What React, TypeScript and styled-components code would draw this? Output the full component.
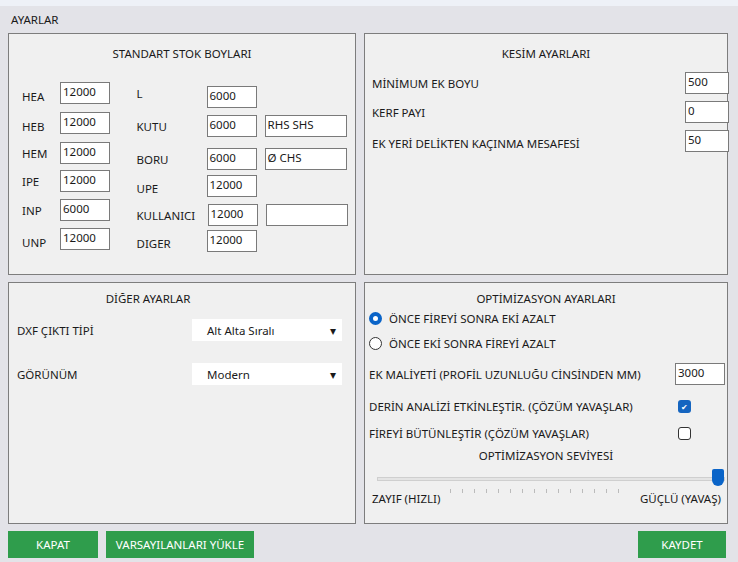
import React from "react";
import styled, { createGlobalStyle } from "styled-components";

const G = createGlobalStyle`
  html,body{margin:0;padding:0;background:#e3e3e8;}
  *{box-sizing:border-box;}
  body{font-family:"Noto Sans","Open Sans",sans-serif;font-size:11.5px;color:#1a1a1a;}
`;
const Win = styled.div`width:738px;height:562px;border-top:6px solid #eef1f7;display:flex;flex-direction:column;padding:0 8px 0 8px;`;
const Head = styled.div`height:27px;padding:6px 0 0 3px;`;
const Grid = styled.div`display:grid;grid-template-columns:348px 364px;grid-template-rows:242px 242px;column-gap:8px;row-gap:7px;`;
const Panel = styled.div`background:#f0f0f0;border:1px solid #7d7d7d;display:flex;flex-direction:column;position:relative;`;
const Title = styled.div<{ $t: number; $dx?: number }>`text-align:center;margin-top:${p => p.$t}px;margin-left:${p => p.$dx ?? 0}px;height:16px;`;
const Cols = styled.div`display:flex;`;
const Col = styled.div<{ $l: number; $w: number }>`margin-left:${p => p.$l}px;width:${p => p.$w}px;display:flex;flex-direction:column;`;
const Row = styled.div<{ $t: number }>`display:flex;align-items:center;margin-top:${p => p.$t}px;height:22px;`;
const Lbl = styled.span<{ $w: number; $dy?: number }>`width:${p => p.$w}px;flex:none;position:relative;top:${p => p.$dy ?? 0}px;`;
const Box = styled.div<{ $w: number; $ml?: number; $dy?: number }>`width:${p => p.$w}px;height:22px;margin-left:${p => p.$ml ?? 0}px;background:#fff;border:1px solid #7a7a7a;padding:1px 2px;line-height:16px;position:relative;top:${p => p.$dy ?? 0}px;`;
const Sel = styled.div`width:150px;height:22px;margin-left:auto;background:#fff;display:flex;align-items:center;justify-content:space-between;padding:0 6px 0 15px;`;
const Radio = styled.span<{ $on?: boolean }>`width:13px;height:13px;border-radius:50%;margin-right:7px;border:${p => p.$on ? "4px solid #0a64c8" : "1px solid #333"};background:#fff;flex:none;`;
const Check = styled.span<{ $on?: boolean }>`width:13px;height:13px;border-radius:3px;margin-left:auto;margin-right:36px;display:flex;align-items:center;justify-content:center;color:#fff;font-size:8px;${p => p.$on ? "background:#1565c0;" : "border:1px solid #333;background:#fff;"}`;
const Track = styled.div`margin:13px 2px 0 12px;height:4px;background:#e4e4e4;border:1px solid #cfcfcf;position:relative;`;
const Thumb = styled.div`position:absolute;right:0;top:-9px;width:12px;height:17px;background:#0a64c8;border-radius:2px 2px 6px 6px;`;
const Ticks = styled.div`flex:1;height:4px;margin:0 10px;align-self:flex-start;margin-top:2px;background:repeating-linear-gradient(90deg,#bbb 0 1px,transparent 1px 12px);`;
const Bottom = styled.div`display:flex;gap:8px;margin-top:7px;`;
const Btn = styled.div<{ $w: number; $auto?: boolean }>`width:${p => p.$w}px;height:27px;background:#2f9d4c;color:#fff;display:flex;align-items:center;justify-content:center;${p => p.$auto ? "margin-left:auto;margin-right:4px;" : ""}`;

export default function App() {
  return (
    <Win>
      <G />
      <Head>AYARLAR</Head>
      <Grid>
        <Panel>
          <Title $t={12}>STANDART STOK BOYLARI</Title>
          <Cols>
            <Col $l={13} $w={110}>
              {[["HEA", "12000", 20], ["HEB", "12000", 8], ["HEM", "12000", 8], ["IPE", "12000", 6], ["INP", "6000", 7], ["UNP", "12000", 7]].map(([l, v, t], i) => (
                <Row key={i} $t={t as number}><Lbl $w={38} $dy={i === 0 || i === 1 || i === 5 ? 3 : 0}>{l}</Lbl><Box $w={50}>{v}</Box></Row>
              ))}
            </Col>
            <Col $l={10} $w={230}>
              {[["L", "6000", 24, ""], ["KUTU", "6000", 7, "RHS SHS"], ["BORU", "6000", 11, "Ø CHS"], ["UPE", "12000", 5, null], ["KULLANICI", "12000", 7, " "], ["DIGER", "12000", 4, null]].map(([l, v, t, e], i) => (
                <Row key={i} $t={t as number}>
                  <Lbl $w={i === 4 ? 71 : 70} $dy={i === 0 ? -4 : i === 3 || i === 5 ? 2 : 0}>{l}</Lbl>
                  <Box $w={50}>{v}</Box>
                  {e ? <Box $w={82} $ml={8}>{e.trim()}</Box> : null}
                </Row>
              ))}
            </Col>
          </Cols>
        </Panel>
        <Panel>
          <Title $t={12}>KESİM AYARLARI</Title>
          <Col $l={7} $w={358}>
            {[["MİNİMUM EK BOYU", "500", 10], ["KERF PAYI", "0", 7], ["EK YERİ DELİKTEN KAÇINMA MESAFESİ", "50", 7]].map(([l, v, t], i) => (
              <Row key={i} $t={t as number}><Lbl $w={313} $dy={i === 2 ? 2 : 0}>{l}</Lbl><Box $w={44}>{v}</Box></Row>
            ))}
          </Col>
        </Panel>
        <Panel>
          <Title $t={8} $dx={-68}>DİĞER AYARLAR</Title>
          <Col $l={8} $w={325}>
            <Row $t={12}><Lbl $w={150}>DXF ÇIKTI TİPİ</Lbl><Sel>Alt Alta Sıralı<span>▾</span></Sel></Row>
            <Row $t={22}><Lbl $w={150}>GÖRÜNÜM</Lbl><Sel>Modern<span>▾</span></Sel></Row>
          </Col>
        </Panel>
        <Panel>
          <Title $t={8}>OPTİMİZASYON AYARLARI</Title>
          <Col $l={4} $w={358}>
            <Row $t={0}><Radio $on />ÖNCE FİREYİ SONRA EKİ AZALT</Row>
            <Row $t={3}><Radio />ÖNCE EKİ SONRA FİREYİ AZALT</Row>
            <Row $t={9}><Lbl $w={306} $dy={0}>EK MALİYETİ (PROFİL UZUNLUĞU CİNSİNDEN MM)</Lbl><Box $w={50}>3000</Box></Row>
            <Row $t={10}><Lbl $w={300}>DERİN ANALİZİ ETKİNLEŞTİR. (ÇÖZÜM YAVAŞLAR)</Lbl><Check $on>✔</Check></Row>
            <Row $t={5}><Lbl $w={300}>FİREYİ BÜTÜNLEŞTİR (ÇÖZÜM YAVAŞLAR)</Lbl><Check /></Row>
          </Col>
          <Title $t={4}>OPTİMİZASYON SEVİYESİ</Title>
          <Track><Thumb /></Track>
          <Row $t={6} style={{ marginLeft: 7, marginRight: 6 }}><span>ZAYIF (HIZLI)</span><Ticks /><span>GÜÇLÜ (YAVAŞ)</span></Row>
        </Panel>
      </Grid>
      <Bottom>
        <Btn $w={90}>KAPAT</Btn>
        <Btn $w={148}>VARSAYILANLARI YÜKLE</Btn>
        <Btn $w={88} $auto>KAYDET</Btn>
      </Bottom>
    </Win>
  );
}
